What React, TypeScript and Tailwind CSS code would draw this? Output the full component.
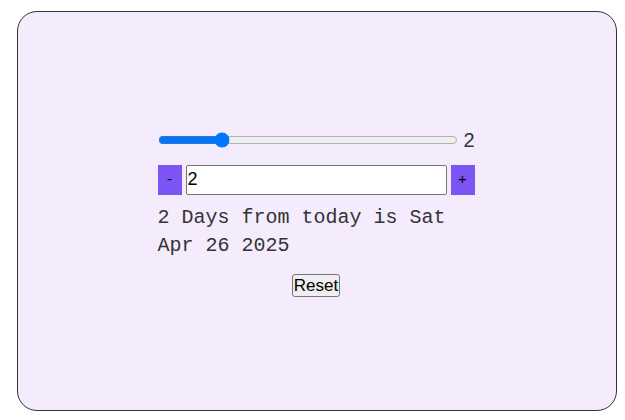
import React, { useState } from "react";

export default function App() {
  const [days, setDays] = useState(2);
  const d = new Date(2025, 3, 24 + days);
  const str = d.toDateString();
  return (
    <div className="w-[625px] h-[420px] bg-white pt-[11px] pl-[17px]">
      <div className="w-[600px] h-[400px] rounded-[20px] border border-[#333] bg-[#f4ecfd] flex items-center justify-center">
        <div className="w-[317px] flex flex-col pt-[4px] mr-[2px]">
          <div className="flex items-center h-[20px]">
            <input
              type="range"
              min={0}
              max={10}
              value={days}
              onChange={(e) => setDays(Number(e.target.value))}
              className="w-[302px] m-0 accent-[#0075ff]"
            />
            <span className="ml-[5px] text-[20px] text-[#333] font-['Liberation_Sans',sans-serif] leading-none">
              {days}
            </span>
          </div>
          <div className="flex items-center gap-[4px] mt-[15px]">
            <button
              onClick={() => setDays(days - 1)}
              className="w-[24px] h-[30px] bg-[#7b54f3] text-black text-[15px] font-['Liberation_Sans',sans-serif] flex items-center justify-center"
            >
              -
            </button>
            <input
              type="text"
              value={days}
              onChange={(e) => setDays(Number(e.target.value) || 0)}
              className="w-[261px] h-[30px] bg-white border border-[#767676] rounded-[2px] px-[1px] text-[18px] text-black font-['Liberation_Sans',sans-serif] outline-none"
            />
            <button
              onClick={() => setDays(days + 1)}
              className="w-[24px] h-[30px] bg-[#7b54f3] text-black text-[15px] font-['Liberation_Sans',sans-serif] flex items-center justify-center"
            >
              +
            </button>
          </div>
          <p className="mt-[9px] text-[20px] leading-[28px] text-[#333] font-['Liberation_Mono',monospace]">
            {days} Days from today is {str}
          </p>
          <div className="flex justify-center mt-[14px]">
            <button
              onClick={() => setDays(2)}
              className="h-[23px] px-[1px] bg-[#efefef] border border-[#767676] rounded-[3px] text-[17px] leading-none text-black font-['Liberation_Sans',sans-serif]"
            >
              Reset
            </button>
          </div>
        </div>
      </div>
    </div>
  );
}
